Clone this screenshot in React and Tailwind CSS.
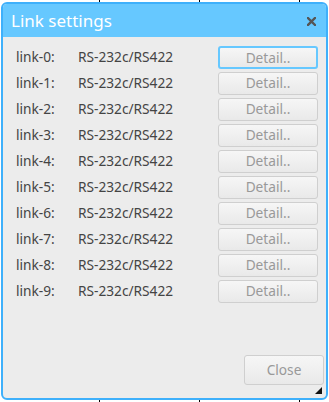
import React from "react";

const links = Array.from({ length: 10 }, (_, i) => ({ name: `link-${i}:`, type: "RS-232c/RS422" }));

export default function App() {
    return (
        <div className="w-[329px] h-[402px] bg-white bg-[repeating-linear-gradient(90deg,transparent_0_99px,#000_99px_100px)] pt-[2px] pl-[1px] font-['Noto_Sans',sans-serif]">
            <div className="w-[327px] h-[398px] flex flex-col rounded-[6px] border-2 border-[#3eb0fb] bg-[#ececec] overflow-hidden relative">
                <div className="h-[33px] bg-[#66c8ff] flex items-center justify-between pl-[8px] pr-[10px] shrink-0">
                    <span className="text-white text-[17px] leading-none">Link settings</span>
                    <svg width="9" height="9" viewBox="0 0 9 9" className="mt-[1px]">
                        <path d="M1 1L8 8M8 1L1 8" stroke="#555" strokeWidth="2.4" strokeLinecap="square" />
                    </svg>
                </div>
                <div className="flex flex-col gap-[3px] pt-[9px] pl-[13px] pr-[8px]">
                    {links.map((l, i) => (
                        <div key={i} className="flex items-center h-[23px] text-[13.7px] text-[#444]">
                            <span className="w-[62px]">{l.name}</span>
                            <span className="flex-1">{l.type}</span>
                            <button
                                className={`w-[100px] h-[23px] rounded-[3px] border text-[13.7px] text-[#999] bg-[linear-gradient(#f6f6f6,#e9e9e9)] ${
                                    i === 0 ? "border-[#66c8ff] border-2" : "border-[#cfcfcf]"
                                }`}
                            >
                                Detail..
                            </button>
                        </div>
                    ))}
                </div>
                <div className="flex-1" />
                <div className="flex justify-end pr-[2px] pb-[13px]">
                    <button className="w-[80px] h-[30px] rounded-[3px] border border-[#cfcfcf] text-[13.7px] text-[#999] bg-[linear-gradient(#f6f6f6,#e9e9e9)]">
                        Close
                    </button>
                </div>
                <svg width="7" height="7" viewBox="0 0 7 7" className="absolute right-[4px] bottom-[4px]">
                    <path d="M7 0L7 7L0 7Z" fill="#111" />
                </svg>
            </div>
        </div>
    );
}
